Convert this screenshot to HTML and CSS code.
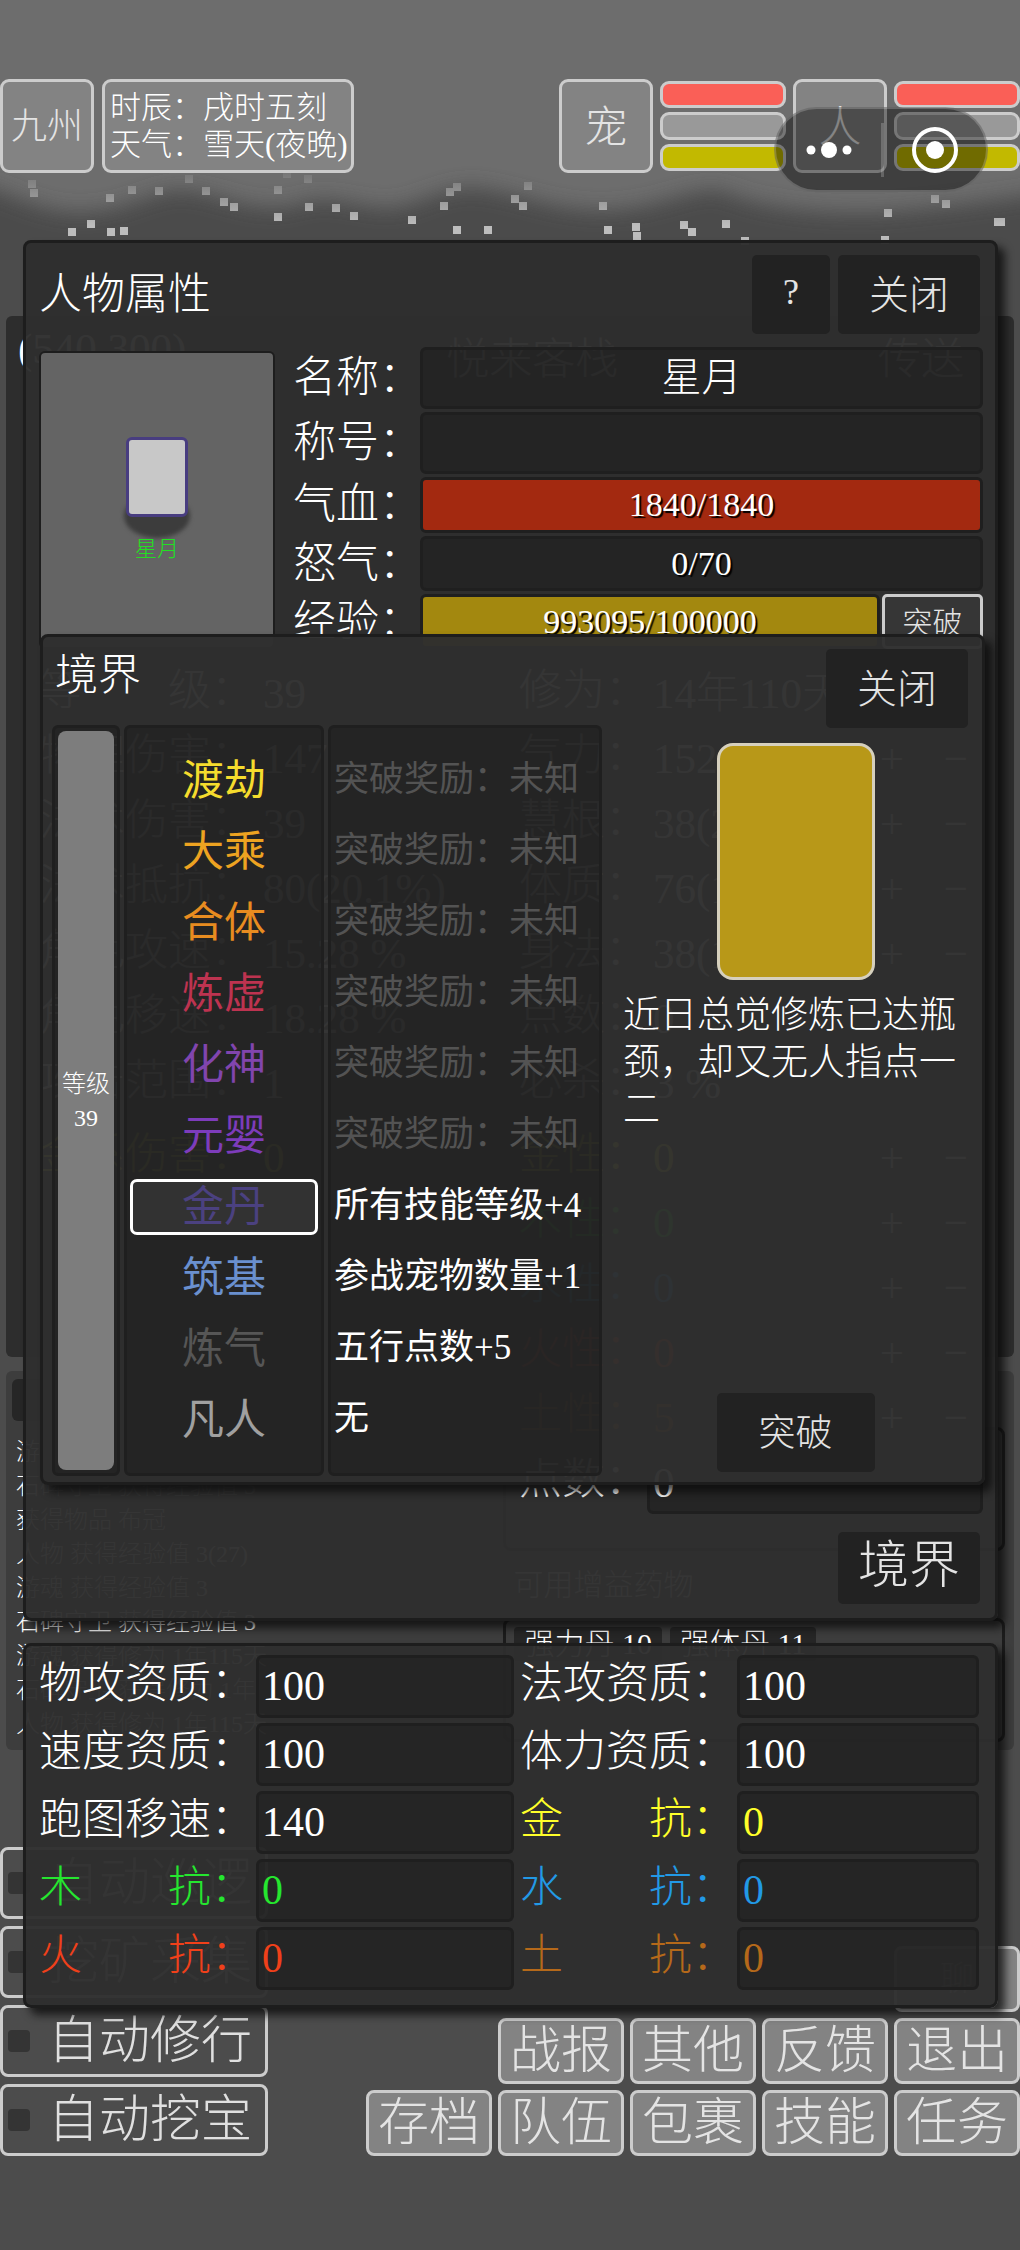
FILE: index.html
```html
<!DOCTYPE html>
<html lang="zh-CN">
<head>
    <meta charset="UTF-8">
    <meta name="viewport" content="width=device-width, initial-scale=1.0">
    <title>人物属性</title>
    <link rel="stylesheet" href="styles.css">
</head>
<body>
    <div class="game">
        <!-- Sky: clouds and snow -->
        <svg class="sky" viewBox="0 0 1020 260" preserveAspectRatio="none" aria-hidden="true">
            <defs>
                <filter id="soft" x="-10%" y="-40%" width="120%" height="180%"><feGaussianBlur stdDeviation="10"/></filter>
                <linearGradient id="flake" gradientUnits="userSpaceOnUse" x1="0" y1="172" x2="0" y2="226">
                    <stop offset="0" stop-color="#757575"/>
                    <stop offset="1" stop-color="#bdbdbd"/>
                </linearGradient>
            </defs>
            <rect width="1020" height="260" fill="#6d6d6d"/>
            <path d="M-40 182 C0 184 20 206 70 212 C120 214 140 196 175 190 C220 190 240 212 290 206 C330 192 340 204 390 208 C430 202 440 186 480 188 C530 196 560 212 610 210 C660 208 690 188 720 190 C760 208 820 214 880 212 C940 208 1000 200 1060 190 V320 H-40 Z" fill="#4c4c4c" filter="url(#soft)"/>
            <g fill="url(#flake)">
                <path d="M28 180h8v8h-8zM30 189h8v8h-8zM106 194h8v8h-8zM128 186h8v8h-8zM155 187h8v8h-8zM185 175h8v8h-8zM202 187h8v8h-8zM220 198h8v8h-8zM230 203h8v8h-8zM274 186h8v8h-8zM274 213h8v8h-8zM283 170h8v8h-8zM304 175h8v8h-8zM305 203h8v8h-8zM332 204h8v8h-8zM350 212h8v8h-8zM408 216h8v8h-8zM440 202h8v8h-8zM446 188h8v8h-8zM453 183h8v8h-8zM453 226h8v8h-8zM484 226h8v8h-8zM68 228h8v8h-8zM87 220h8v8h-8zM107 228h8v8h-8zM120 227h8v8h-8z"/>
                <path d="M511 195h8v8h-8zM519 202h8v8h-8zM524 182h8v8h-8zM599 202h8v8h-8zM604 226h8v8h-8zM632 223h8v8h-8zM633 232h8v8h-8zM680 221h8v8h-8zM688 228h8v8h-8zM722 220h8v8h-8zM884 209h8v8h-8zM942 200h8v8h-8zM931 195h8v8h-8zM994 218h8v8h-8zM997 218h8v8h-8zM881 236h8v8h-8zM741 237h8v8h-8z"/>
            </g>
        </svg>

        <!-- Game scene -->
        <div class="scene">
            <header class="hud">
                <button class="tile">九州</button>
                <div class="clock">
                    <span>时辰：戌时五刻</span>
                    <span>天气：雪天(夜晚)</span>
                </div>
                <div class="unit">
                    <button class="tile tile-large">宠</button>
                    <div class="bars">
                        <div class="bar bar-hp"></div>
                        <div class="bar"></div>
                        <div class="bar bar-exp"></div>
                    </div>
                    <button class="tile tile-large">人</button>
                    <div class="bars">
                        <div class="bar bar-hp"></div>
                        <div class="bar"></div>
                        <div class="bar bar-exp"></div>
                    </div>
                </div>
                <div class="capsule">
                    <button class="capsule-button" aria-label="更多">
                        <svg width="46" height="18" viewBox="0 0 46 18"><circle cx="5" cy="9" r="4.5"/><circle cx="23" cy="9" r="8"/><circle cx="41" cy="9" r="4.5"/></svg>
                    </button>
                    <span class="capsule-line"></span>
                    <button class="capsule-button" aria-label="退出小程序">
                        <svg width="48" height="48" viewBox="0 0 48 48"><circle class="ring" cx="24" cy="24" r="21"/><circle cx="24" cy="24" r="9"/></svg>
                    </button>
                </div>
            </header>

            <section class="map">
                <span>(540,300)</span>
                <span>悦来客栈</span>
                <span>传送</span>
            </section>

            <section class="feed">
                <div class="log">
                    <div class="log-head"></div>
                    <p>游魂 获得经验值 3</p>
                    <p>石碑守卫 获得经验值 3</p>
                    <p>获得物品 布冠</p>
                    <p>人物 获得经验值 3(27)</p>
                    <p>游魂 获得经验值 3</p>
                    <p>石碑守卫 获得经验值 3</p>
                    <p>游魂 获得修为 1年115天</p>
                    <p>石碑守卫 获得修为 1年</p>
                    <p>人物 获得修为 1年115天</p>
                </div>
                <div class="items">
                    <div class="item-box"></div>
                    <p>可用增益药物</p>
                    <div class="item-box">
                        <span>强力丹 10</span>
                        <span>强体丹 11</span>
                    </div>
                </div>
            </section>

            <footer class="controls">
                <div class="autos">
                    <label class="auto"><input type="checkbox">自动巡逻</label>
                    <label class="auto"><input type="checkbox">挖矿采集</label>
                    <label class="auto"><input type="checkbox">自动修行</label>
                    <label class="auto"><input type="checkbox">自动挖宝</label>
                </div>
                <nav class="menu">
                    <button class="menu-last">聊</button>
                    <button class="menu-second">战报</button>
                    <button>其他</button>
                    <button>反馈</button>
                    <button>退出</button>
                    <button>存档</button>
                    <button>队伍</button>
                    <button>包裹</button>
                    <button>技能</button>
                    <button>任务</button>
                </nav>
            </footer>
        </div>

        <!-- Windows over the scene -->
        <div class="windows">
            <section class="window character">
                <header class="window-head">
                    <h1>人物属性</h1>
                    <button class="dark-button help">?</button>
                    <button class="dark-button">关闭</button>
                </header>

                <div class="profile">
                    <div class="portrait">
                        <div class="avatar"></div>
                        <span class="avatar-name">星月</span>
                    </div>
                    <div class="vitals">
                        <span>名称：</span><output class="name">星月</output>
                        <span>称号：</span><output></output>
                        <span>气血：</span><output class="meter hp">1840/1840</output>
                        <span>怒气：</span><output class="meter">0/70</output>
                        <span>经验：</span><output class="meter exp">993095/100000</output>
                        <button class="outline-button">突破</button>
                    </div>
                </div>

                <div class="stats">
                    <dl class="stat-list">
                        <dt>等　　级：</dt><dd>39</dd>
                        <dt>物理伤害：</dt><dd>147</dd>
                        <dt>法术伤害：</dt><dd>39</dd>
                        <dt>法术抵抗：</dt><dd>80(20.1%)</dd>
                        <dt>角色攻速：</dt><dd>15.28 %</dd>
                        <dt>角色移速：</dt><dd>18.28 %</dd>
                        <dt>攻击范围：</dt><dd>1</dd>
                        <dt class="gold break">金系伤害：</dt><dd class="gold break">0</dd>
                    </dl>
                    <div class="point-list">
                        <div class="point"><span>修为：</span><output>14年110天</output></div>
                        <div class="point"><span>气力：</span><output>152</output><button>+</button><button>−</button></div>
                        <div class="point"><span>慧根：</span><output>38(20)</output><button>+</button><button>−</button></div>
                        <div class="point"><span>体质：</span><output>76(10)</output><button>+</button><button>−</button></div>
                        <div class="point"><span>身法：</span><output>38(10)</output><button>+</button><button>−</button></div>
                        <div class="point"><span>点数：</span><output>0</output></div>
                        <div class="point"><span>必杀：</span><output>3 %</output></div>
                        <div class="point gold break"><span>金性：</span><output>0</output><button>+</button><button>−</button></div>
                        <div class="point wood"><span>木性：</span><output>0</output><button>+</button><button>−</button></div>
                        <div class="point water"><span>水性：</span><output>0</output><button>+</button><button>−</button></div>
                        <div class="point fire"><span>火性：</span><output>0</output><button>+</button><button>−</button></div>
                        <div class="point earth"><span>土性：</span><output>5</output><button>+</button><button>−</button></div>
                        <div class="point"><span>点数：</span><output>0</output></div>
                    </div>
                </div>

                <button class="dark-button realm-open">境界</button>

                <!-- Realm window -->
                <section class="window realm">
                    <div class="realm-left">
                        <h2>境界</h2>
                        <div class="realm-columns">
                            <div class="panel level">
                                <div class="level-bar"><span>等级</span><span>39</span></div>
                            </div>
                            <ul class="panel realm-names">
                                <li class="c-dujie">渡劫</li>
                                <li class="c-dacheng">大乘</li>
                                <li class="c-heti">合体</li>
                                <li class="c-lianxu">炼虚</li>
                                <li class="c-huashen">化神</li>
                                <li class="c-yuanying">元婴</li>
                                <li class="c-jindan current">金丹</li>
                                <li class="c-zhuji">筑基</li>
                                <li class="c-lianqi">炼气</li>
                                <li class="c-fanren">凡人</li>
                            </ul>
                            <ul class="panel rewards">
                                <li class="locked">突破奖励：未知</li>
                                <li class="locked">突破奖励：未知</li>
                                <li class="locked">突破奖励：未知</li>
                                <li class="locked">突破奖励：未知</li>
                                <li class="locked">突破奖励：未知</li>
                                <li class="locked">突破奖励：未知</li>
                                <li>所有技能等级+4</li>
                                <li>参战宠物数量+1</li>
                                <li>五行点数+5</li>
                                <li>无</li>
                            </ul>
                        </div>
                    </div>
                    <div class="realm-right">
                        <button class="dark-button realm-close">关闭</button>
                        <div class="card"></div>
                        <p>近日总觉修炼已达瓶颈，却又无人指点一二</p>
                        <button class="dark-button realm-break">突破</button>
                    </div>
                </section>
            </section>

            <section class="window aptitude">
                <dl>
                    <dt>物攻资质：</dt><dd>100</dd>
                    <dt>法攻资质：</dt><dd>100</dd>
                    <dt>速度资质：</dt><dd>100</dd>
                    <dt>体力资质：</dt><dd>100</dd>
                    <dt>跑图移速：</dt><dd>140</dd>
                    <dt class="gold">金　　抗：</dt><dd class="gold">0</dd>
                    <dt class="wood">木　　抗：</dt><dd class="wood">0</dd>
                    <dt class="water">水　　抗：</dt><dd class="water">0</dd>
                    <dt class="fire">火　　抗：</dt><dd class="fire">0</dd>
                    <dt class="earth">土　　抗：</dt><dd class="earth">0</dd>
                </dl>
            </section>
        </div>
    </div>
</body>
</html>
```
FILE: styles.css
```css
* {
    box-sizing: border-box;
}
body {
    margin: 0;
    background-color: #4c4c4c;
    color: #fff;
    font-family: "Liberation Serif", "Noto Sans CJK SC", serif;
    font-weight: 300;
    font-size: 43px;
}
button {
    font: inherit;
    color: #e4e4e4;
    padding: 0;
    border: none;
    cursor: pointer;
}
h1, h2, p, dl, dd, ul {
    margin: 0;
    padding: 0;
    font-size: inherit;
    font-weight: inherit;
}
ul {
    list-style: none;
}
.game {
    position: relative;
    display: grid;
    grid-template-columns: minmax(0, 1fr);
    min-height: 100vh;
}
.sky {
    position: absolute;
    top: 0;
    left: 0;
    width: 100%;
    height: 260px;
}
.scene, .windows {
    grid-area: 1 / 1;
    position: relative;
}
.gold { color: #ffff2a; }
.wood { color: #25e62f; }
.water { color: #2299e6; }
.fire { color: #f0401a; }
.earth { color: #b5691a; }

/* Scene */
.scene {
    display: flex;
    flex-direction: column;
    padding: 79px 0 94px;
}
.hud {
    position: relative;
    display: flex;
    gap: 8px;
    height: 94px;
}
.tile, .clock {
    border: 3px solid #ccc;
    border-radius: 9px;
    background-color: #838383;
}
.tile {
    width: 94px;
    padding-bottom: 6px;
    font-size: 36px;
}
.tile-large {
    font-size: 43px;
}
.clock {
    display: flex;
    flex-direction: column;
    justify-content: center;
    padding: 0 5px;
    width: 252px;
    font-size: 31px;
    line-height: 37px;
    white-space: nowrap;
}
.unit {
    display: flex;
    gap: 7px;
    margin-left: auto;
}
.bars {
    display: flex;
    flex-direction: column;
    gap: 4px;
    padding: 2px 0;
    width: 126px;
}
.bar {
    flex: 1;
    border: 3px solid #ccc;
    border-radius: 9px;
    background-color: #999;
}
.bar-hp { background-color: #fa5f57; }
.bar-exp { background-color: #c2b900; }
.capsule {
    position: absolute;
    top: 28px;
    right: 32px;
    display: flex;
    align-items: center;
    width: 214px;
    height: 85px;
    padding-left: 2px;
    border: 2px solid rgba(255, 255, 255, 0.2);
    border-radius: 43px;
    background-color: rgba(0, 0, 0, 0.42);
}
.capsule-button {
    display: flex;
    flex: 1;
    justify-content: center;
    background: none;
}
.capsule svg {
    fill: #fff;
}
.capsule .ring {
    fill: none;
    stroke: #fff;
    stroke-width: 4;
}
.capsule-line {
    width: 3px;
    height: 54px;
    background-color: rgba(255, 255, 255, 0.2);
}
.map {
    flex: 1;
    display: flex;
    justify-content: space-between;
    margin: 143px 6px 0;
    padding: 8px 50px 0 12px;
    border-radius: 6px;
    background-color: #2d2d2d;
}
.feed {
    display: grid;
    grid-template-columns: 46fr 50fr;
    gap: 30px;
    min-height: 379px;
    margin: 14px 6px 97px;
    padding: 8px 9px 8px 6px;
    border-radius: 6px;
    background-color: #3d3d3d;
    font-size: 24px;
    line-height: 34px;
}
.log {
    padding-left: 4px;
}
.log-head {
    height: 42px;
    margin: 0 0 14px -4px;
    border-radius: 6px;
    background-color: #262626;
}
.items {
    display: flex;
    flex-direction: column;
    justify-content: space-between;
    padding-top: 48px;
    font-size: 30px;
}
.items p {
    padding-left: 10px;
}
.item-box {
    display: flex;
    align-items: flex-start;
    gap: 8px;
    height: 124px;
    padding: 6px 8px;
    border: 3px solid #1c1c1c;
    border-radius: 8px;
}
.item-box span {
    padding: 0 10px;
    border-radius: 4px;
    background-color: #262626;
}
.controls {
    display: flex;
    justify-content: space-between;
    align-items: flex-end;
}
.autos {
    display: grid;
    gap: 7px;
}
.auto {
    display: flex;
    align-items: center;
    gap: 18px;
    width: 268px;
    height: 72px;
    padding-left: 5px;
    border: 3px solid #ccc;
    border-radius: 8px;
    color: #e0e0e0;
    font-size: 51px;
    line-height: 64px;
    white-space: nowrap;
}
.auto input {
    appearance: none;
    flex: none;
    width: 22px;
    height: 22px;
    margin: 0;
    border-radius: 4px;
    background-color: #343434;
}
.menu {
    display: grid;
    grid-template-columns: repeat(5, 126px);
    gap: 6px;
}
.menu button {
    height: 66px;
    border: 3px solid #ccc;
    border-radius: 8px;
    background-color: #838383;
    font-size: 51px;
    line-height: 58px;
}
.menu .menu-last {
    grid-column: 5;
    font-size: 34px;
}
.menu .menu-second {
    grid-column: 2;
}

/* Windows */
.windows {
    display: flex;
    flex-direction: column;
    gap: 22px;
    padding: 240px 22px 0 23px;
}
.window {
    border: 3px solid #1d1d1d;
    border-radius: 8px;
    background-color: rgba(46, 46, 46, 0.97);
    box-shadow: 7px 7px 8px rgba(10, 10, 10, 0.75);
}
.character {
    position: relative;
    padding: 12px 12px 14px 13px;
}
.window-head {
    display: flex;
    gap: 8px;
    height: 79px;
    padding-right: 3px;
}
.window-head h1 {
    margin-right: auto;
    line-height: 79px;
}
.dark-button {
    width: 142px;
    height: 79px;
    padding-bottom: 5px;
    border-radius: 5px;
    background-color: #222;
    font-size: 40px;
}
.window-head .help {
    width: 78px;
    font-size: 36px;
}
.profile {
    display: flex;
    gap: 18px;
    margin-top: 13px;
}
.portrait {
    display: flex;
    flex-direction: column;
    align-items: center;
    justify-content: center;
    width: 236px;
    margin-top: 4px;
    border: 2px solid #1d1d1d;
    border-radius: 6px;
    background-color: #646464;
    isolation: isolate;
}
.avatar {
    position: relative;
    width: 62px;
    height: 80px;
    border: 3px solid #483d80;
    border-radius: 6px;
    background-color: #c8c8c8;
}
.avatar::after {
    content: "";
    position: absolute;
    z-index: -1;
    left: -5px;
    right: -5px;
    bottom: -24px;
    height: 44px;
    border-radius: 50%;
    background-color: #3c3c3c;
    filter: blur(2px);
}
.avatar-name {
    margin-top: 18px;
    color: #22e022;
    font-size: 22px;
    line-height: 28px;
}
.vitals {
    flex: 1;
    display: grid;
    grid-template-columns: 125px 1fr 101px;
    grid-template-rows: 62px 62px 56px 55px 55px;
    gap: 3px 2px;
}
.vitals span, .vitals output {
    display: flex;
    align-items: center;
    line-height: 50px;
    white-space: nowrap;
}
.vitals output {
    grid-column: 2 / 4;
    justify-content: center;
}
.vitals .exp {
    grid-column: 2;
}
.vitals output, .stats dd, .stats output, .aptitude dd {
    border: 3px solid #1f1f1f;
    border-radius: 6px;
    background-color: rgba(0, 0, 0, 0.2);
}
.vitals .name {
    font-size: 40px;
}
.vitals .meter {
    font-size: 34px;
    text-shadow: 2px 2px 1px #000;
}
.vitals .hp { background-color: #a32910; }
.vitals .exp { background-color: #a3880f; }
.outline-button {
    padding-bottom: 3px;
    border: 3px solid #ccc;
    border-radius: 5px;
    background-color: #363636;
    font-size: 30px;
}
.stats {
    display: grid;
    grid-template-columns: 470px 1fr;
    gap: 10px;
    margin-top: 14px;
    line-height: 56px;
    white-space: nowrap;
}
.stat-list {
    display: grid;
    grid-template-columns: 218px 1fr;
    grid-auto-rows: 62px;
    row-gap: 3px;
    align-content: start;
}
.stats .break {
    margin-top: 9px;
}
.stat-list .break {
    height: 62px;
}
.stat-list dd {
    padding-left: 3px;
}
.point-list {
    display: grid;
    gap: 3px;
}
.point {
    display: flex;
    gap: 10px;
    height: 62px;
}
.point span {
    width: 118px;
}
.point output {
    flex: 1;
    padding-left: 3px;
}
.point button {
    width: 54px;
    border-radius: 5px;
    background-color: #262626;
}
.realm-open {
    display: block;
    height: 72px;
    margin: 18px 3px 0 auto;
    font-size: 51px;
    line-height: 68px;
}

/* Realm window lies over the stats */
.realm {
    position: absolute;
    top: 391px;
    left: 14px;
    right: 10px;
    display: grid;
    grid-template-columns: 550px 1fr;
    gap: 21px;
    padding: 12px 14px 6px 9px;
}
.realm h2 {
    padding-left: 3px;
    line-height: 54px;
}
.realm-columns {
    display: grid;
    grid-template-columns: 68px 200px 1fr;
    gap: 4px;
    margin-top: 22px;
}
.panel {
    border: 3px solid #1f1f1f;
    border-radius: 6px;
    background-color: rgba(0, 0, 0, 0.2);
}
.level {
    display: flex;
    padding: 3px;
}
.level-bar {
    flex: 1;
    display: flex;
    flex-direction: column;
    align-items: center;
    justify-content: center;
    border-radius: 8px;
    background-color: #7d7d7d;
    font-size: 24px;
    line-height: 34px;
}
.realm-names, .rewards {
    display: grid;
    gap: 15px;
    padding: 25px 3px 25px;
    font-weight: 400;
}
.realm-names li, .rewards li {
    height: 56px;
    white-space: nowrap;
}
.realm-names li {
    border: 3px solid transparent;
    border-radius: 7px;
    font-size: 42px;
    line-height: 50px;
    text-align: center;
}
.realm-names .current {
    border-color: #fff;
    background-color: #323232;
}
.rewards li {
    font-size: 35px;
    line-height: 53px;
}
.rewards .locked {
    color: #535353;
}
.c-dujie { color: #f5dc2d; }
.c-dacheng { color: #eda321; }
.c-heti { color: #e88c20; }
.c-lianxu { color: #bd3350; }
.c-huashen { color: #8145ae; }
.c-yuanying { color: #7d3cbb; }
.c-jindan { color: #4b4180; }
.c-zhuji { color: #6a90cf; }
.c-lianqi { color: #565656; }
.c-fanren { color: #a0a0a0; }
.realm-right {
    display: flex;
    flex-direction: column;
    align-items: center;
}
.realm-close {
    align-self: flex-end;
}
.card {
    width: 158px;
    height: 237px;
    margin-top: 15px;
    border: 3px solid #d6d0bd;
    border-radius: 16px;
    background-color: #b89818;
}
.realm-right p {
    margin-top: 12px;
    font-size: 37px;
    line-height: 47px;
}
.realm-break {
    width: 158px;
    margin-top: auto;
    margin-bottom: 4px;
    font-size: 37px;
}

/* Aptitude window */
.aptitude {
    padding: 9px 16px 15px 13px;
}
.aptitude dl {
    display: grid;
    grid-template-columns: 217px 258px 223px 1fr;
    row-gap: 5px;
    line-height: 57px;
    white-space: nowrap;
}
.aptitude dt:nth-of-type(even) {
    padding-left: 6px;
}
.aptitude dd {
    padding-left: 3px;
    font-size: 42px;
}
```
